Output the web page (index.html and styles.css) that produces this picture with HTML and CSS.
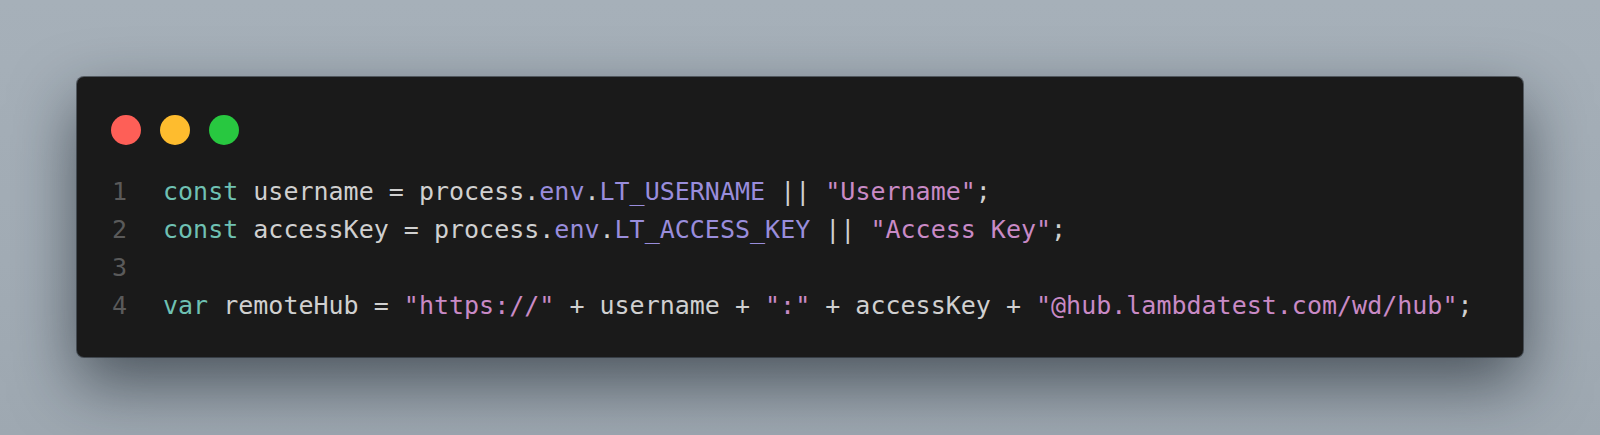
FILE: index.html
```html
<!DOCTYPE html>
<html>
<head>
<meta charset="utf-8">
<link rel="stylesheet" href="styles.css">
</head>
<body>
<div class="stage">
  <div class="window">
    <div class="dots">
      <span class="dot red"></span>
      <span class="dot yellow"></span>
      <span class="dot green"></span>
    </div>
    <div class="code">
      <div class="line"><span class="ln">1</span><span class="src"><span class="kw">const</span> username = process.<span class="pr">env</span>.<span class="pr">LT_USERNAME</span> || <span class="st">"Username"</span>;</span></div>
      <div class="line"><span class="ln">2</span><span class="src"><span class="kw">const</span> accessKey = process.<span class="pr">env</span>.<span class="pr">LT_ACCESS_KEY</span> || <span class="st">"Access Key"</span>;</span></div>
      <div class="line"><span class="ln">3</span><span class="src"></span></div>
      <div class="line"><span class="ln">4</span><span class="src"><span class="kw">var</span> remoteHub = <span class="st">"https://"</span> + username + <span class="st">":"</span> + accessKey + <span class="st">"@hub.lambdatest.com/wd/hub"</span>;</span></div>
    </div>
  </div>
</div>
</body>
</html>
```

FILE: styles.css
```css
html, body {
  margin: 0;
  padding: 0;
}
body {
  width: 1600px;
  height: 435px;
  overflow: hidden;
  background: linear-gradient(180deg, #a6b0b9 0%, #a2acb5 60%, #9ea8b1 100%);
}
.stage {
  padding: 77px 77px 0 77px;
}
.window {
  width: 1446px;
  height: 280px;
  box-sizing: border-box;
  background: #1a1a1a;
  border-radius: 7px;
  box-shadow: 0 26px 64px rgba(20, 28, 36, 0.6), 0 0 0 1px rgba(40, 44, 48, 0.6);
  padding: 38px 34px 0 34px;
}
.dots {
  display: flex;
  gap: 19px;
  height: 30px;
}
.dot {
  width: 30px;
  height: 30px;
  border-radius: 50%;
  display: block;
}
.red { background: #fe5f57; }
.yellow { background: #febc2e; }
.green { background: #28c840; }
.code {
  margin-top: 28px;
  font-family: "DejaVu Sans Mono", "Liberation Mono", monospace;
  font-size: 25px;
  line-height: 38px;
  color: #d0d0d0;
}
.line {
  display: flex;
  height: 38px;
}
.ln {
  width: 51px;
  flex: none;
  padding-left: 1px;
  color: #5a5a5a;
}
.src {
  white-space: pre;
}
.kw { color: #6fc1b3; }
.pr { color: #998ddc; }
.st { color: #c98ac6; }
```
